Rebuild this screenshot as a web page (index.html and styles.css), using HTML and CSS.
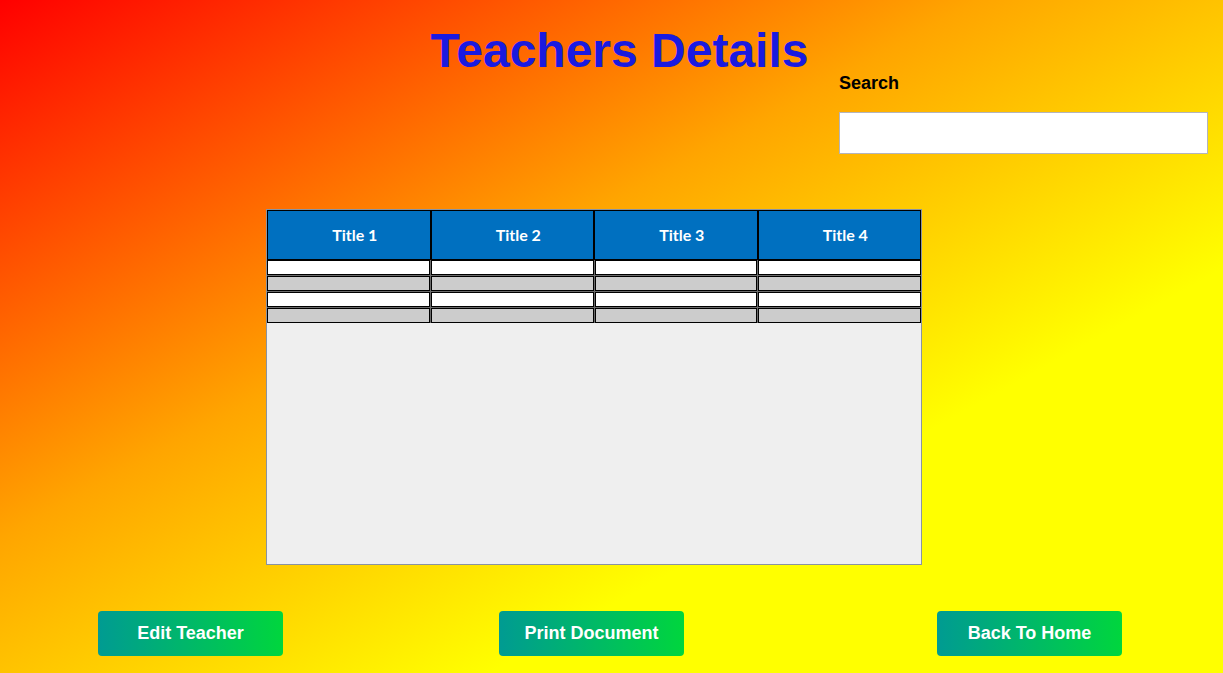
FILE: index.html
```html
<!DOCTYPE html>
<html lang="en">
<head>
<meta charset="utf-8">
<title>Teachers Details</title>
<link rel="stylesheet" href="styles.css">
</head>
<body>
<div class="page">
  <header class="top">
    <h1 class="title">Teachers Details</h1>
    <div class="search">
      <label class="search-label" for="q">Search</label>
      <input class="search-input" id="q" type="text">
    </div>
  </header>

  <section class="table-box">
    <div class="thead">
      <div class="th">Title 1</div>
      <div class="th">Title 2</div>
      <div class="th">Title 3</div>
      <div class="th">Title 4</div>
    </div>
    <div class="tbody">
      <div class="td"></div><div class="td"></div><div class="td"></div><div class="td"></div>
      <div class="td alt"></div><div class="td alt"></div><div class="td alt"></div><div class="td alt"></div>
      <div class="td"></div><div class="td"></div><div class="td"></div><div class="td"></div>
      <div class="td alt"></div><div class="td alt"></div><div class="td alt"></div><div class="td alt"></div>
    </div>
  </section>

  <footer class="actions">
    <button class="btn">Edit Teacher</button>
    <button class="btn btn-mid">Print Document</button>
    <button class="btn btn-last">Back To Home</button>
  </footer>
</div>
</body>
</html>
```

FILE: styles.css
```css
html, body {
  margin: 0;
  padding: 0;
}

body {
  min-height: 673px;
  background: linear-gradient(to bottom right, #ff0000 0%, #ffa500 40%, #ffff00 70%, #ffff00 100%);
  font-family: "Liberation Sans", Arial, sans-serif;
}

.page {
  display: flex;
  flex-direction: column;
  min-height: 673px;
}

.top {
  display: flex;
  flex-direction: column;
}

.title {
  margin: 23px 0 0 0;
  padding-left: 16px;
  text-align: center;
  font-size: 48px;
  font-weight: bold;
  line-height: normal;
  color: #1a1ae0;
}

.search {
  align-self: flex-end;
  margin: -5px 15px 0 0;
  width: 369px;
  display: flex;
  flex-direction: column;
}

.search-label {
  font-size: 18px;
  font-weight: bold;
  color: #000;
  line-height: 20px;
}

.search-input {
  margin: 19px 0 0 0;
  height: 42px;
  box-sizing: border-box;
  border: 1px solid #b4b4bc;
  background: #fff;
  padding: 0 8px;
  font-size: 16px;
  outline: none;
}

.table-box {
  margin: 55px 0 0 266px;
  width: 656px;
  height: 356px;
  box-sizing: border-box;
  border: 1px solid #8a93a0;
  background: #efefef;
}

.thead {
  display: grid;
  grid-template-columns: repeat(4, 1fr);
}

.th {
  height: 50px;
  box-sizing: border-box;
  border: 1px solid #000;
  background: #0070c0;
  color: #fff;
  font-family: Lato, "Open Sans", sans-serif;
  font-weight: bold;
  font-size: 16px;
  padding-left: 12px;
  padding-bottom: 1px;
  display: flex;
  align-items: center;
  justify-content: center;
}

.tbody {
  display: grid;
  grid-template-columns: repeat(4, 1fr);
  gap: 1px;
  background: #6a6a6a;
}

.td {
  height: 15px;
  box-sizing: border-box;
  border: 1px solid #000;
  background: #fff;
}

.td.alt {
  background: #cccccc;
}

.actions {
  display: flex;
  margin: 46px 0 0 98px;
}

.btn {
  width: 185px;
  height: 45px;
  border: none;
  border-radius: 4px;
  background: linear-gradient(to right, #009b92, #00d63d);
  color: #fff;
  font-family: "Liberation Sans", Arial, sans-serif;
  font-weight: bold;
  font-size: 18px;
  cursor: pointer;
}

.btn-mid {
  margin-left: 216px;
}

.btn-last {
  margin-left: 253px;
}
```
